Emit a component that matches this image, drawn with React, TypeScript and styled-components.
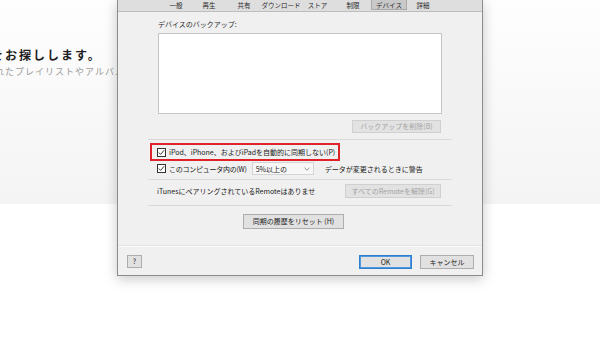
import React from 'react';
import styled, {createGlobalStyle} from 'styled-components';

const GlobalStyle = createGlobalStyle`
  html, body {
    margin: 0;
    padding: 0;
    background: #ffffff;
  }
  body {
    font-family: "Noto Sans CJK JP", "Noto Sans", sans-serif;
    overflow: hidden;
  }
`;

const Page = styled.div`
  position: relative;
  width: 600px;
  height: 338px;
  overflow: hidden;
  background: #ffffff;
`;

const Hero = styled.section`
  height: 204px;
  background: linear-gradient(#fefefe, #f4f4f4);
  padding-top: 46px;
  box-sizing: border-box;
  overflow: hidden;
`;

const HeroTitle = styled.h2`
  margin: 0 0 0 -9px;
  font-size: 12px;
  line-height: 18px;
  font-weight: 600;
  letter-spacing: 2px;
  color: #1e1e1e;
  white-space: nowrap;
`;

const HeroLead = styled.p`
  margin: 2px 0 0 -5px;
  font-size: 9px;
  line-height: 12px;
  letter-spacing: 1px;
  color: #9a9a9a;
  white-space: nowrap;
`;

const Dialog = styled.div`
  position: absolute;
  left: 117px;
  top: 0;
  width: 366px;
  height: 276px;
  box-sizing: border-box;
  display: flex;
  flex-direction: column;
  background: #f0f0f0;
  border: 1px solid #8c8c8c;
  border-top: none;
  box-shadow: 0 3px 12px rgba(0, 0, 0, 0.22);
  font-size: 7px;
  color: #1a1a1a;
`;

const TabBar = styled.div`
  height: 11px;
  display: flex;
  padding-left: 42px;
  background: #dedede;
  border-bottom: 1px solid #bdbdbd;
`;

const Tab = styled.div<{ $w: number; $active?: boolean }>`
  width: ${p => p.$w}px;
  height: 10px;
  box-sizing: border-box;
  display: flex;
  align-items: center;
  justify-content: center;
  font-size: 6.5px;
  line-height: 10px;
  color: #2a2a2a;
  white-space: nowrap;
  background: ${p => (p.$active ? '#c9c9c9' : 'transparent')};
  border: ${p => (p.$active ? '1px solid #a9a9a9' : '1px solid transparent')};
  border-top: none;
`;

const Body = styled.div`
  flex: 1;
  display: flex;
  flex-direction: column;
  padding: 8px 30px 0;
`;

const Label = styled.div`
  margin-left: 10px;
  line-height: 9px;
  height: 9px;
  color: #2a2a2a;
`;

const BackupList = styled.div`
  margin: 4px 10px 0;
  height: 81px;
  box-sizing: border-box;
  background: #ffffff;
  border: 1px solid #c6c6c6;
`;

const ButtonRow = styled.div<{ $top: number }>`
  display: flex;
  justify-content: flex-end;
  margin: ${p => p.$top}px 11px 0 0;
`;

const Button = styled.button<{ $w: number; $h?: number; $primary?: boolean }>`
  width: ${p => p.$w}px;
  height: ${p => p.$h ?? 14}px;
  box-sizing: border-box;
  padding: 0;
  margin: 0;
  font-family: inherit;
  font-size: 7px;
  line-height: 1;
  color: ${p => (p.disabled ? '#a3a3a3' : '#222')};
  background: ${p => (p.disabled ? '#e2e2e2' : '#e1e1e1')};
  border: 1px solid ${p => (p.disabled ? '#d0d0d0' : p.$primary ? '#2f7fd0' : '#adadad')};
  box-shadow: ${p => (p.$primary ? 'inset 0 0 0 1px #4f97de' : 'none')};
  white-space: nowrap;
`;

const Separator = styled.div<{ $top: number }>`
  height: 1px;
  margin-top: ${p => p.$top}px;
  background: #d9d9d9;
`;

const Highlight = styled.div`
  margin: 3px 0 0 2px;
  width: 190px;
  height: 18px;
  box-sizing: border-box;
  border: 2px solid #df2329;
  display: flex;
  align-items: center;
  padding-left: 5px;
`;

const CheckRow = styled.label<{ $indent?: number }>`
  display: flex;
  align-items: center;
  gap: 3px;
  white-space: nowrap;
  padding-left: ${p => p.$indent ?? 0}px;
`;

const Box = styled.span`
  width: 9px;
  height: 9px;
  box-sizing: border-box;
  border: 1px solid #333;
  background: #fff;
  display: inline-flex;
  align-items: center;
  justify-content: center;
  flex: none;
`;

const OptionRow = styled.div`
  display: flex;
  align-items: center;
  margin-top: 1px;
  height: 13px;
  padding-left: 9px;
  white-space: nowrap;
`;

const CompactLabel = styled.span`
  letter-spacing: -0.25px;
`;

const Select = styled.div`
  margin-left: 5px;
  width: 62px;
  height: 13px;
  box-sizing: border-box;
  border: 1px solid #d4d4d4;
  background: #f7f7f7;
  display: flex;
  align-items: center;
  justify-content: space-between;
  padding: 0 3px;
  margin-right: 11px;
`;

const RemoteRow = styled.div`
  display: flex;
  align-items: center;
  justify-content: space-between;
  margin: 4px 11px 0 9px;
  white-space: nowrap;
`;

const ResetButton = styled(Button)`
  align-self: flex-start;
  margin: 8px 0 0 95px;
`;

const FooterLine = styled.div`
  height: 1px;
  background: #fbfbfb;
  border-top: 1px solid #e2e2e2;
`;

const Footer = styled.div`
  height: 28px;
  display: flex;
  align-items: flex-start;
  padding: 8px 8px 0 9px;
  box-sizing: border-box;
  gap: 8px;
`;

const Spacer = styled.div`
  flex: 1;
`;

const tabs = [
  {label: '一般', w: 32},
  {label: '再生', w: 34},
  {label: '共有', w: 36},
  {label: 'ダウンロード', w: 38},
  {label: 'ストア', w: 35},
  {label: '制限', w: 36},
  {label: 'デバイス', w: 36, active: true},
  {label: '詳細', w: 32},
];

const Check = () => (
  <Box>
    <svg width="7" height="7" viewBox="0 0 7 7">
      <polyline points="0.8,3.6 2.6,5.4 6.2,1.2" fill="none" stroke="#222" strokeWidth="0.9"/>
    </svg>
  </Box>
);

const App = () => {
  return (
    <>
      <GlobalStyle/>
      <Page>
        <Hero>
          <HeroTitle>をお探しします。</HeroTitle>
          <HeroLead>れたプレイリストやアルバムを聴くことができます。</HeroLead>
        </Hero>

        <Dialog>
          <TabBar>
            {tabs.map(t => (
              <Tab key={t.label} $w={t.w} $active={t.active}>{t.label}</Tab>
            ))}
          </TabBar>

          <Body>
            <Label>デバイスのバックアップ:</Label>
            <BackupList/>
            <ButtonRow $top={6}>
              <Button $w={89} $h={13} disabled>バックアップを削除(B)</Button>
            </ButtonRow>

            <Separator $top={6}/>

            <Highlight>
              <CheckRow>
                <Check/>
                iPod、iPhone、およびiPadを自動的に同期しない(P)
              </CheckRow>
            </Highlight>

            <OptionRow>
              <CheckRow>
                <Check/>
                <CompactLabel>このコンピュータ内の(W)</CompactLabel>
              </CheckRow>
              <Select>
                <span>5%以上の</span>
                <svg width="6" height="4" viewBox="0 0 6 4">
                  <polyline points="0.5,0.8 3,3.2 5.5,0.8" fill="none" stroke="#777" strokeWidth="0.8"/>
                </svg>
              </Select>
              <span>データが変更されるときに警告</span>
            </OptionRow>

            <Separator $top={4}/>

            <RemoteRow>
              <span>iTunesにペアリングされているRemoteはありませ</span>
              <Button $w={96} disabled>すべてのRemoteを解除(G)</Button>
            </RemoteRow>

            <Separator $top={7}/>

            <ResetButton $w={101} $h={15}>同期の履歴をリセット (H)</ResetButton>
          </Body>

          <FooterLine/>
          <Footer>
            <Button $w={15} $h={13}>?</Button>
            <Spacer/>
            <Button $w={53} $primary>OK</Button>
            <Button $w={54}>キャンセル</Button>
          </Footer>
        </Dialog>
      </Page>
    </>
  );
};

export default App;
